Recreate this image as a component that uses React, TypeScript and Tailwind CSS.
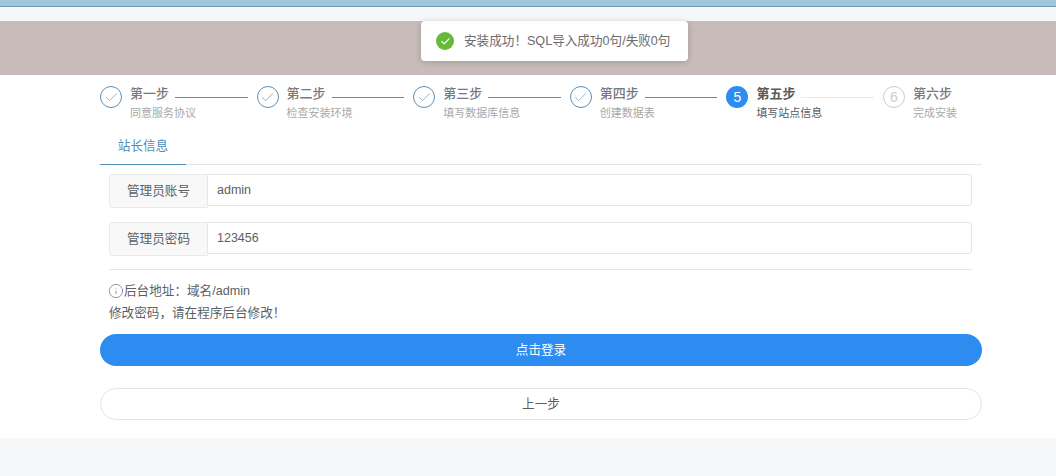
import { Check, Info } from 'lucide-react';

const FONT = "font-['Liberation_Sans','Noto_Sans_CJK_SC',sans-serif]";

const STEPS = [
  { title: '第一步', desc: '同意服务协议', state: 'done' },
  { title: '第二步', desc: '检查安装环境', state: 'done' },
  { title: '第三步', desc: '填写数据库信息', state: 'done' },
  { title: '第四步', desc: '创建数据表', state: 'done' },
  { title: '第五步', desc: '填写站点信息', state: 'active' },
  { title: '第六步', desc: '完成安装', state: 'todo' },
];

function StepIcon({ state, n }: { state: string; n: number }) {
  if (state === 'done') {
    return (
      <div className="flex h-[22px] w-[22px] shrink-0 items-center justify-center rounded-full border border-[#5a90b8] bg-white">
        <Check className="h-[15px] w-[15px] text-[#6f8fa8]" strokeWidth={1.1} />
      </div>
    );
  }
  if (state === 'active') {
    return (
      <div className="flex h-[22px] w-[22px] shrink-0 items-center justify-center rounded-full bg-[#2d8cf0] text-sm text-white">
        {n}
      </div>
    );
  }
  return (
    <div className="flex h-[22px] w-[22px] shrink-0 items-center justify-center rounded-full border border-[#ccc] bg-white text-sm text-[#ccc]">
      {n}
    </div>
  );
}

function Step({ step, n, last }: { step: (typeof STEPS)[number]; n: number; last: boolean }) {
  const lineColor = step.state === 'done' ? 'bg-[#4f8fb8]' : 'bg-[#e8eaec]';
  return (
    <div className={last ? 'flex w-[99px] gap-2' : 'flex w-[156.6px] gap-2'}>
      <div className="pt-[1px]">
        <StepIcon state={step.state} n={n} />
      </div>
      <div className="min-w-0 flex-1">
        <div className="flex h-[18px] items-center">
          <span className={`text-[13px] ${step.state === 'active' ? 'font-bold text-[#5a5a5a]' : 'font-medium text-[#77797e]'}`}>
            {step.title}
          </span>
          {!last && <span className={`ml-[6px] mr-[9px] mt-[6px] h-px flex-1 ${lineColor}`} />}
        </div>
        <div className={`mt-px text-[11px] leading-[18px] ${step.state === 'active' ? 'text-[#55585e]' : 'text-[#a8a8a8]'}`}>
          {step.desc}
        </div>
      </div>
    </div>
  );
}

function Field({ label, value }: { label: string; value: string }) {
  return (
    <div className="flex items-start">
      <div className="flex h-[34px] w-[99px] shrink-0 items-center justify-center rounded-l-[3px] border border-[#e8eaec] bg-[#f8f8f9] text-[12.6px] text-[#5b5f66]">
        {label}
      </div>
      <div className="-ml-px flex h-[32px] flex-1 items-center rounded-r-[3px] border border-[#e3e5e9] bg-white pl-[9px] text-[12.5px] text-[#5b5f66]">
        {value}
      </div>
    </div>
  );
}

export default function App() {
  return (
    <div className={`relative flex h-[476px] w-[1056px] flex-col overflow-hidden bg-[#f5f7f9] ${FONT}`}>
      <div className="h-[7px] shrink-0 border-b border-[#6f99ab] bg-[#a0c6dd]" />
      <div className="h-[14px] shrink-0 bg-[#f5f7f9]" />
      <div className="h-[54px] shrink-0 bg-[#c7bcb9]" />

      <div className="absolute left-[421px] top-[21px] flex h-[40px] w-[267px] items-center gap-[10px] rounded-[4px] bg-white pl-[15px] text-[12.6px] text-[#6b6b70] shadow-[0_1px_6px_rgba(0,0,0,0.2)]">
        <span className="flex h-[18px] w-[18px] items-center justify-center rounded-full bg-[#67b93a]">
          <Check className="h-[11px] w-[11px] text-white" strokeWidth={2.5} />
        </span>
        安装成功！SQL导入成功0句/失败0句
      </div>

      <div className="h-[363px] shrink-0 bg-white pt-[10px] pl-[100px]">
        <div className="w-[882px]">
          <div className="flex">
            {STEPS.map((s, i) => (
              <Step key={s.title} step={s} n={i + 1} last={i === STEPS.length - 1} />
            ))}
          </div>

          <div className="mt-[3px] flex h-[40px] border-b border-[#e3e5e9]">
            <div className="-mb-px flex w-[86px] items-center justify-center border-b border-[#4f8fb8] pt-[3px] text-[12.6px] text-[#4a8dbb]">
              站长信息
            </div>
          </div>

          <div className="flex flex-col gap-[14px] pl-[9px] pr-[10px] pt-[9px]">
            <Field label="管理员账号" value="admin" />
            <Field label="管理员密码" value="123456" />
          </div>

          <div className="ml-[9px] mr-[10px] mt-[13px] h-px bg-[#e3e5e9]" />

          <div className="mx-[9px] mt-[10px] text-[12.6px] leading-[22px] text-[#5b5f66]">
            <div className="flex items-center">
              <Info className="-ml-px h-[16px] w-[16px] text-[#80848f]" strokeWidth={1.25} />
              后台地址：域名/admin
            </div>
            <div>修改密码，请在程序后台修改！</div>
          </div>

          <button
            type="button"
            className="mt-[10px] flex h-[32px] w-full items-center justify-center rounded-full bg-[#2d8cf0] text-[12.6px] text-white"
          >
            点击登录
          </button>
          <button
            type="button"
            className="mt-[22px] flex h-[32px] w-full items-center justify-center rounded-full border border-[#e3e5e9] bg-white text-[12.6px] text-[#5b5f66]"
          >
            上一步
          </button>
        </div>
      </div>
    </div>
  );
}
